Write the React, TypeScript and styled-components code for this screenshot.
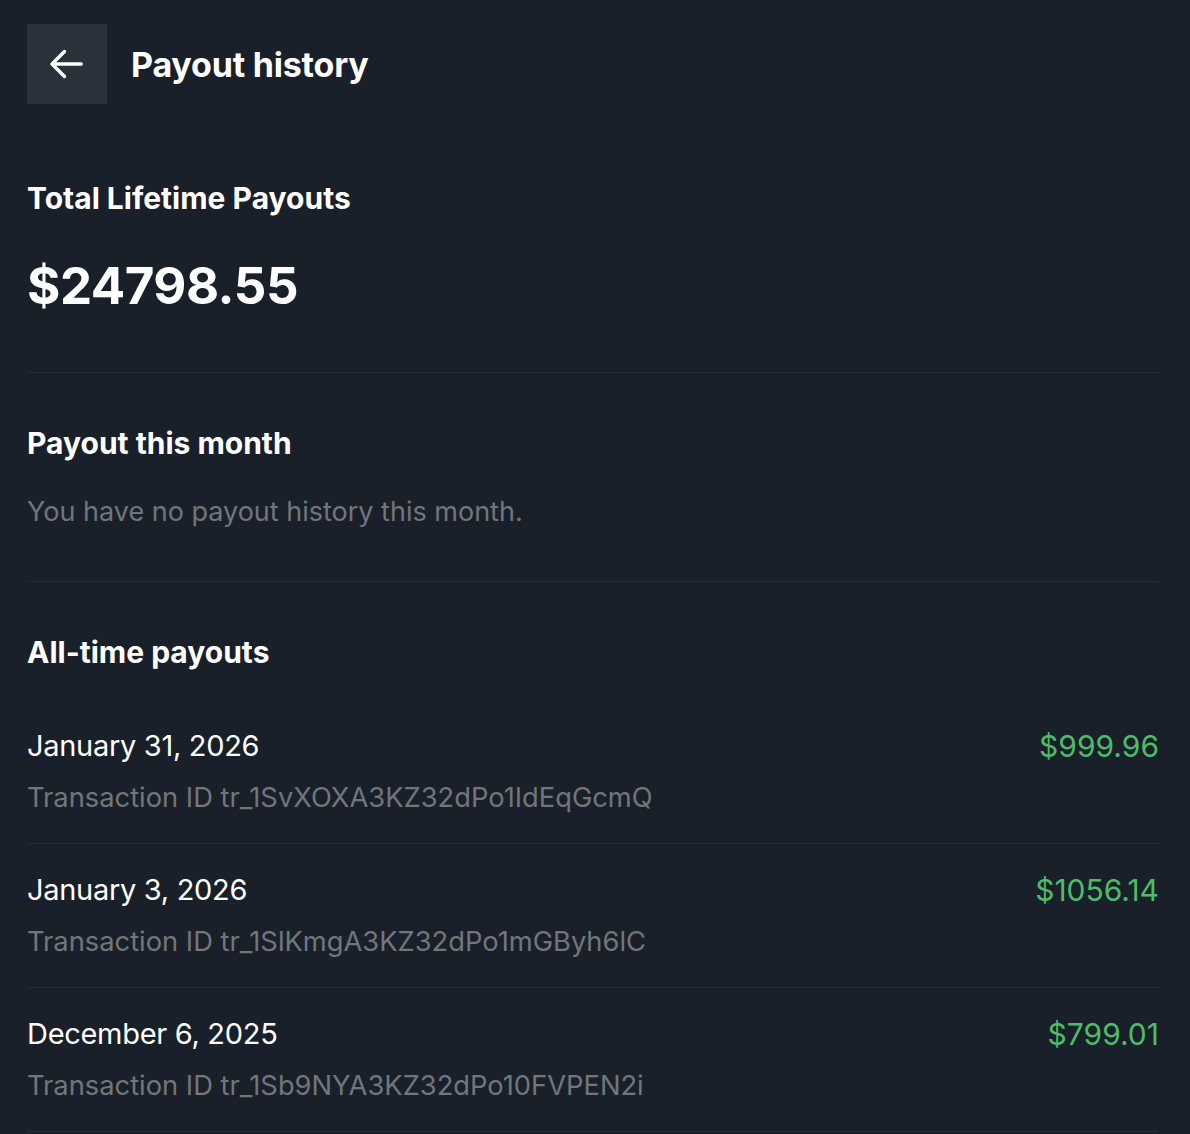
import styled, { createGlobalStyle } from "styled-components";

const GlobalStyle = createGlobalStyle`
  body {
    margin: 0;
    background: #1a202a;
    font-family: Inter, "Noto Sans", sans-serif;
    color: #ffffff;
  }
`;

const Page = styled.div`
  padding: 24px 31px 0 27px;
  min-height: 1134px;
  box-sizing: border-box;
`;

const Header = styled.div`
  display: flex;
  align-items: center;
  gap: 24px;
  height: 80px;
`;

const BackButton = styled.button`
  width: 80px;
  height: 80px;
  border: none;
  padding: 0;
  background: #29313b;
  color: #ffffff;
  display: flex;
  align-items: center;
  justify-content: center;
  cursor: pointer;
`;

const Title = styled.h1`
  margin: 0;
  font-size: 34px;
  font-weight: 700;
  letter-spacing: -0.2px;
`;

const Section = styled.section<{ $pad: string }>`
  padding: ${({ $pad }) => $pad};
  border-bottom: 1px solid #252c36;
`;

const SectionTitle = styled.h2<{ $gap?: number }>`
  margin: 0 0 ${({ $gap }) => $gap ?? 0}px;
  font-size: 30px;
  font-weight: 700;
  line-height: 36px;
`;

const Total = styled.div`
  margin-top: 38px;
  font-size: 51px;
  font-weight: 700;
  line-height: 64px;
  letter-spacing: -0.5px;
`;

const Muted = styled.p`
  margin: 33px 0 0;
  font-size: 27px;
  line-height: 36px;
  color: #71767b;
`;

const List = styled.div`
  display: flex;
  flex-direction: column;
  padding-top: 52px;
`;

const Row = styled.div`
  display: flex;
  justify-content: space-between;
  align-items: flex-start;
  padding: 28px 0 27px;
  border-bottom: 1px solid #252c36;
`;

const RowText = styled.div`
  display: flex;
  flex-direction: column;
  gap: 16px;
`;

const Date = styled.div`
  font-size: 29px;
  line-height: 36px;
  letter-spacing: -0.3px;
`;

const TxId = styled.div`
  font-size: 27.3px;
  line-height: 36px;
  color: #71767b;
`;

const Amount = styled.div`
  font-size: 30px;
  line-height: 36px;
  color: #4cbc68;
`;

const payouts = [
  { date: "January 31, 2026", id: "tr_1SvXOXA3KZ32dPo1IdEqGcmQ", amount: "$999.96" },
  { date: "January 3, 2026", id: "tr_1SlKmgA3KZ32dPo1mGByh6lC", amount: "$1056.14" },
  { date: "December 6, 2025", id: "tr_1Sb9NYA3KZ32dPo10FVPEN2i", amount: "$799.01" },
];

export default function App() {
  return (
    <>
      <GlobalStyle />
      <Page>
        <Header>
          <BackButton aria-label="Back">
            <svg width="40" height="40" viewBox="0 0 24 24" fill="none" stroke="currentColor" strokeWidth="2" strokeLinecap="round" strokeLinejoin="round">
              <path d="M20.5 12H3.5" />
              <path d="M10.5 4.5L3 12l7.5 7.5" />
            </svg>
          </BackButton>
          <Title>Payout history</Title>
        </Header>
        <Section $pad="76px 0 54px">
          <SectionTitle>Total Lifetime Payouts</SectionTitle>
          <Total>$24798.55</Total>
        </Section>
        <Section $pad="52px 0 51px">
          <SectionTitle>Payout this month</SectionTitle>
          <Muted>You have no payout history this month.</Muted>
        </Section>
        <List>
          <SectionTitle $gap={30}>All-time payouts</SectionTitle>
          {payouts.map((p) => (
            <Row key={p.id}>
              <RowText>
                <Date>{p.date}</Date>
                <TxId>Transaction ID {p.id}</TxId>
              </RowText>
              <Amount>{p.amount}</Amount>
            </Row>
          ))}
        </List>
      </Page>
    </>
  );
}
